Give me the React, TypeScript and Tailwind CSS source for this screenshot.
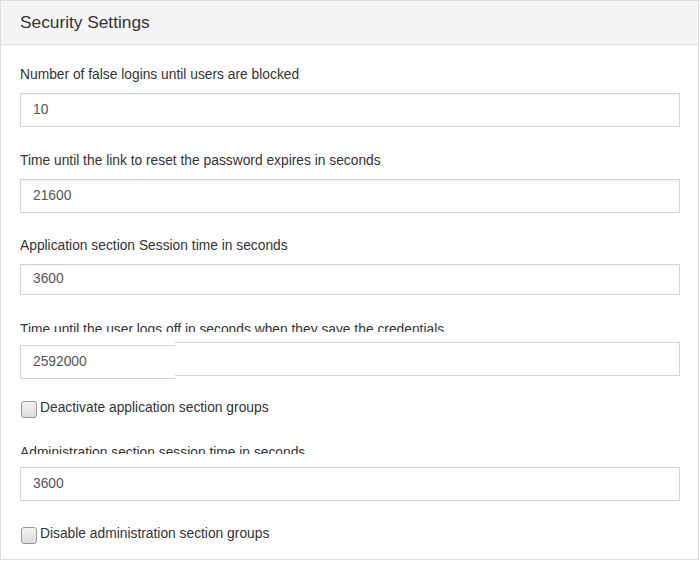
const font = { fontFamily: '"Liberation Sans", Arial, sans-serif' };

function Field({ label, value, className = "", h = "h-[34px]" }: { label: string; value: string; className?: string; h?: string }) {
    return (
        <div className={className}>
            <div className="text-[13.8px] leading-5 text-[#333]">{label}</div>
            <div className={"mt-[8px] border border-[#d4d4d4] flex items-center px-3 text-[13.8px] text-[#555] shadow-[inset_0_1px_1px_rgba(0,0,0,0.05)] " + h}>
                {value}
            </div>
        </div>
    );
}

function Check({ label, className = "" }: { label: string; className?: string }) {
    return (
        <div className={"flex items-center " + className}>
            <span className="ml-[1px] w-[16px] h-[17px] rounded-[3px] border border-[#9a9a9a] bg-gradient-to-b from-[#f3f3f3] to-[#dcdcdc]" />
            <span className="ml-[3px] text-[13.8px] leading-5 text-[#333] -mt-[2px]">{label}</span>
        </div>
    );
}

export default function App() {
    return (
        <div className="w-[700px] h-[561px] bg-white" style={font}>
            <div className="w-[699px] h-[560px] border border-[#ddd] flex flex-col">
                <div className="h-[44px] bg-[#f5f5f5] border-b border-[#ddd] flex items-center px-[19px] pt-[1px] text-[17.3px] text-[#333]">
                    Security Settings
                </div>

                <div className="pl-[19px] pr-[18px] pt-[20px]">
                    <Field label="Number of false logins until users are blocked" value="10" />
                    <Field className="mt-[24px]" label="Time until the link to reset the password expires in seconds" value="21600" />
                    <Field className="mt-[23px]" h="h-[31px]" label="Application section Session time in seconds" value="3600" />

                    {/* label cut off, input drawn in two pieces */}
                    <div className="mt-[22px] h-[15px] pt-[3px] overflow-hidden text-[13.8px] leading-5 text-[#333]">
                        Time until the user logs off in seconds when they save the credentials
                    </div>
                    <div className="mt-[10px] flex items-start">
                        <div className="mt-[3px] w-[155px] h-[34px] border-l border-t border-b border-[#d4d4d4] flex items-center px-3 text-[13.8px] text-[#555]">
                            2592000
                        </div>
                        <div className="flex-1 h-[34px] border-t border-r border-b border-[#d4d4d4]" />
                    </div>

                    <Check className="mt-[21px]" label="Deactivate application section groups" />

                    <div className="mt-[25px] h-[11px] overflow-hidden text-[13.8px] leading-5 text-[#333]">
                        Administration section session time in seconds
                    </div>
                    <div className="mt-[13px] h-[34px] border border-[#d4d4d4] flex items-center px-3 text-[13.8px] text-[#555]">
                        3600
                    </div>

                    <Check className="mt-[25px]" label="Disable administration section groups" />
                </div>
            </div>
        </div>
    );
}
